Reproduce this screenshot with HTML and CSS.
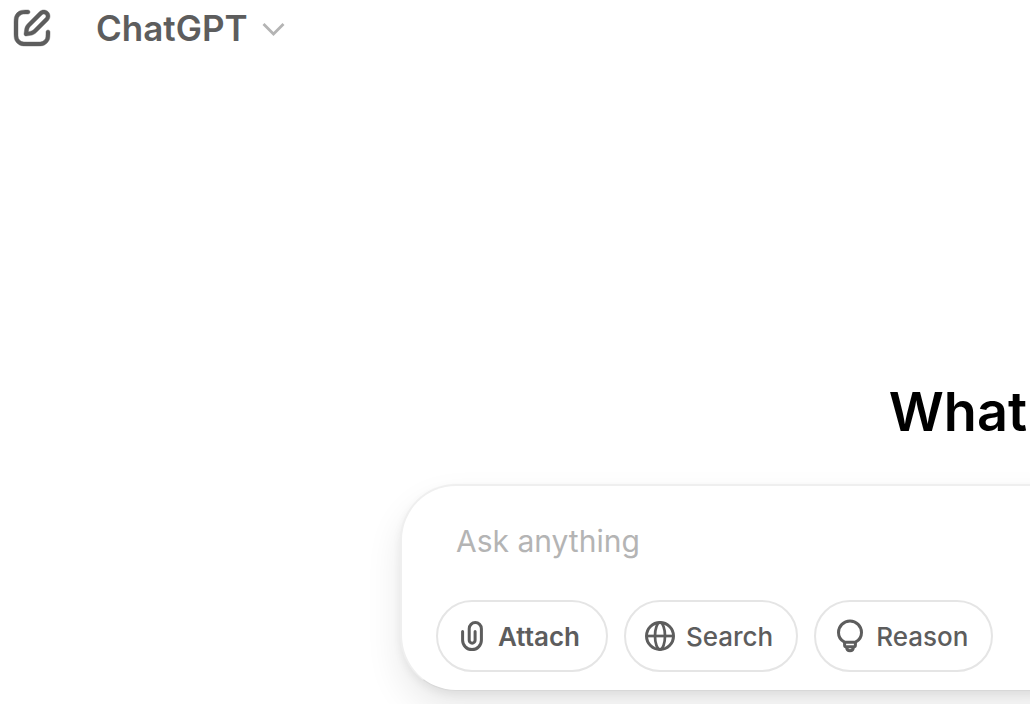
FILE: index.html
```
<!DOCTYPE html>
<html lang="en">
<head>
<meta charset="utf-8">
<meta name="viewport" content="width=device-width, initial-scale=1">
<title>ChatGPT</title>
<link rel="stylesheet" href="styles.css">
</head>
<body>
<header class="topbar">
  <button class="icon-button" type="button" aria-label="New chat">
    <svg class="icon-edit" viewBox="0 0 24 24" fill="currentColor" stroke="currentColor" stroke-width="0.2" aria-hidden="true"><path d="M15.6729 3.91287C16.8918 2.69392 18.8682 2.69392 20.0871 3.91287C21.3061 5.13182 21.3061 7.10813 20.0871 8.32708L14.1499 14.2643C13.3849 15.0293 12.3925 15.5255 11.3215 15.6785L9.14142 15.9899C8.82983 16.0344 8.51546 15.9297 8.29289 15.7071C8.07033 15.4845 7.96554 15.1701 8.01005 14.8586L8.32149 12.6785C8.47449 11.6075 8.97072 10.615 9.7357 9.85006L15.6729 3.91287ZM18.6729 5.32708C18.235 4.88918 17.525 4.88918 17.0871 5.32708L11.1499 11.2643C10.6909 11.7233 10.3932 12.3187 10.3014 12.9613L10.1785 13.8215L11.0386 13.6986C11.6812 13.6068 12.2767 13.3091 12.7357 12.8501L18.6729 6.91287C19.1108 6.47497 19.1108 5.76499 18.6729 5.32708ZM11 3.99929C11.0004 4.55157 10.5531 4.99963 10.0008 5.00007C9.00227 5.00084 8.29769 5.00827 7.74651 5.06064C7.20685 5.11191 6.88488 5.20117 6.63803 5.32695C6.07354 5.61457 5.6146 6.07351 5.32698 6.63799C5.19279 6.90135 5.10062 7.24904 5.05118 7.8542C5.00078 8.47105 5 9.26336 5 10.4V13.6C5 14.7366 5.00078 15.5289 5.05118 16.1457C5.10062 16.7509 5.19279 17.0986 5.32698 17.3619C5.6146 17.9264 6.07354 18.3854 6.63803 18.673C6.90138 18.8072 7.24907 18.8993 7.85424 18.9488C8.47108 18.9992 9.26339 19 10.4 19H13.6C14.7366 19 15.5289 18.9992 16.1458 18.9488C16.7509 18.8993 17.0986 18.8072 17.362 18.673C17.9265 18.3854 18.3854 17.9264 18.673 17.3619C18.7988 17.1151 18.8881 16.7931 18.9393 16.2535C18.9917 15.7023 18.9991 14.9977 18.9999 13.9992C19.0003 13.4469 19.4484 12.9995 20.0007 13C20.553 13.0004 21.0003 13.4485 20.9999 14.0007C20.9991 14.9789 20.9932 15.7808 20.9304 16.4426C20.8664 17.116 20.7385 17.7136 20.455 18.2699C19.9757 19.2107 19.2108 19.9756 18.27 20.455C17.6777 20.7568 17.0375 20.8826 16.3086 20.9421C15.6008 21 14.7266 21 13.6428 21H10.3572C9.27339 21 8.39925 21 7.69138 20.9421C6.96253 20.8826 6.32234 20.7568 5.73005 20.455C4.78924 19.9756 4.02433 19.2107 3.54497 18.2699C3.24318 17.6776 3.11737 17.0374 3.05782 16.3086C2.99998 15.6007 2.99999 14.7266 3 13.6428V10.3572C2.99999 9.27337 2.99998 8.39922 3.05782 7.69134C3.11737 6.96249 3.24318 6.3223 3.54497 5.73001C4.02433 4.7892 4.78924 4.0243 5.73005 3.54493C6.28633 3.26149 6.88399 3.13358 7.55735 3.06961C8.21919 3.00673 9.02103 3.00083 9.99922 3.00007C10.5515 2.99964 10.9996 3.447 11 3.99929Z"/></svg>
  </button>
  <button class="model-button" type="button">
    <span>ChatGPT</span>
    <svg class="icon-chevron" viewBox="0 0 32 32" fill="none" stroke="currentColor" stroke-width="2.8" aria-hidden="true"><path d="M5.500 12L15.500 22L25.500 12"/></svg>
  </button>
</header>
<main class="main">
  <h1 class="title">What</h1>
  <form class="composer">
    <input class="prompt" type="text" placeholder="Ask anything" aria-label="Ask anything">
    <div class="tools">
      <button class="tool tool-strong" type="button">
        <svg class="icon-tool" viewBox="0 0 36 36" fill="none" stroke="currentColor" stroke-width="3" stroke-linecap="round" aria-hidden="true"><path d="M8.600 13.500V22.200A9.400 9.400 0 0 0 27.400 22.200V10.700A6.100 6.100 0 0 0 15.200 10.700V22.200A2.950 2.950 0 0 0 21.100 22.200V13.500"/></svg>
        <span>Attach</span>
      </button>
      <button class="tool" type="button">
        <svg class="icon-tool" viewBox="0 0 36 36" fill="none" stroke="currentColor" stroke-width="3" aria-hidden="true"><circle cx="18" cy="18" r="13.500"/><ellipse cx="18" cy="18" rx="5" ry="13.500" stroke-width="2.700"/><path d="M4.500 18H31.500" stroke-width="2.700"/></svg>
        <span>Search</span>
      </button>
      <button class="tool" type="button">
        <svg class="icon-tool" viewBox="0 0 36 36" fill="none" stroke="currentColor" stroke-width="3" stroke-linejoin="round" aria-hidden="true"><path d="M12.500 24.200C8.700 22.200 6.500 18.800 6.500 14.500A11.500 11.500 0 0 1 29.500 14.500C29.500 18.800 27.300 22.200 23.500 24.200Z"/><path d="M12.600 24V27C12.600 28.200 13.200 28.800 14.200 28.800H21.800C22.800 28.800 23.400 28.200 23.400 27V24M14.300 28.800C14.600 31.300 16 32.700 18 32.700S21.400 31.300 21.700 28.800"/></svg>
        <span>Reason</span>
      </button>
    </div>
  </form>
</main>
</body>
</html>
```
FILE: styles.css
```
* {
  box-sizing: border-box;
}

body {
  margin: 0;
  min-height: 100vh;
  overflow: hidden;
  background: #fff;
  color: #000;
  font-family: Inter, "Liberation Sans", sans-serif;
}

button {
  padding: 0;
  border: 0;
  background: none;
  color: #5d5d5d;
  font-family: inherit;
  cursor: pointer;
}

svg {
  display: block;
  flex: none;
}

.topbar {
  display: flex;
  align-items: center;
  gap: 40px;
  height: 56px;
  padding: 0 8px;
}

.icon-edit {
  width: 48px;
  height: 48px;
}

.model-button {
  display: flex;
  align-items: center;
  gap: 10px;
  font-size: 35px;
  font-weight: 600;
  line-height: 56px;
}

.icon-chevron {
  width: 32px;
  height: 32px;
  color: #b4b4b4;
}

.main {
  padding-top: 320px;
}

.title {
  margin: 0 0 36px;
  padding-right: 3px;
  text-align: right;
  font-size: 54px;
  font-weight: 600;
  line-height: 72px;
}

/* The composer runs past the right edge of the window. */
.composer {
  margin: 0 -64px 0 400px;
  padding: 30px 34px 18px;
  border: 2px solid #efefef;
  border-bottom: 1px solid #d8d8d8;
  border-radius: 56px;
  background: #fff;
  box-shadow: 0 4px 8px rgba(0, 0, 0, 0.06), 0 18px 36px rgba(0, 0, 0, 0.09);
}

.prompt {
  display: block;
  width: 100%;
  height: 50px;
  margin-bottom: 34px;
  padding: 0 20px;
  border: 0;
  outline: 0;
  background: none;
  font-family: inherit;
  font-size: 30px;
}

.prompt::placeholder {
  color: #b4b4b4;
  opacity: 1;
}

.tools {
  display: flex;
  gap: 16px;
}

.tool {
  display: flex;
  align-items: center;
  gap: 8px;
  height: 72px;
  padding: 0 23px 0 16px;
  border: 2px solid #e5e5e5;
  border-radius: 36px;
  font-size: 26px;
  font-weight: 500;
}

.tool-strong {
  padding-right: 26px;
  font-weight: 600;
}

.icon-tool {
  width: 36px;
  height: 36px;
}
```
